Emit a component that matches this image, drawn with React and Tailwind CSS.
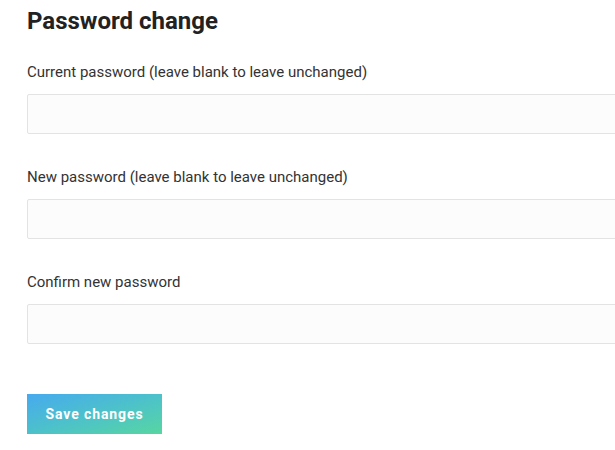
import React from "react";

const fields = [
  "Current password (leave blank to leave unchanged)",
  "New password (leave blank to leave unchanged)",
  "Confirm new password",
];

export default function App() {
  return (
    <div className="w-[615px] h-[450px] overflow-hidden bg-white font-['Roboto',sans-serif]">
      <div className="pl-[27px] pt-[5px]">
        <h2 className="text-[24px] leading-8 font-bold text-[#222]">Password change</h2>
        <form className="mt-[25px]">
          {fields.map((label) => (
            <div key={label} className="mb-[33px]">
              <label className="block text-[15px] leading-5 text-[#333]">{label}</label>
              <input
                type="password"
                className="mt-3 block w-[620px] h-10 rounded-[2px] border border-[#e3e3e3] bg-[#fcfcfc] px-3 outline-none"
              />
            </div>
          ))}
          <button
            type="button"
            className="mt-[17px] w-[135px] h-10 bg-gradient-to-br from-[#48a9ee] to-[#58d6a0] text-white text-[14px] font-bold tracking-[0.9px]"
          >
            Save changes
          </button>
        </form>
      </div>
    </div>
  );
}
